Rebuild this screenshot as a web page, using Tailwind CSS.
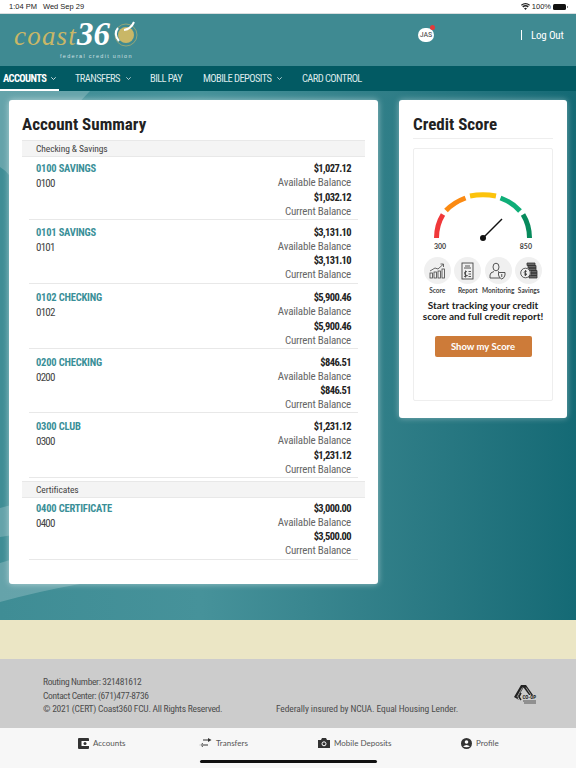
<!DOCTYPE html>
<html lang="en">
<head>
<meta charset="utf-8">
<title>Coast360 Account Summary</title>
<script src="https://cdn.jsdelivr.net/npm/@tailwindcss/browser@4"></script>
</head>
<body class="w-[576px] h-[768px] overflow-hidden bg-white font-['Roboto',sans-serif] [font-stretch:75%] text-[#333]">

<!-- status bar -->
<div class="h-[14px] bg-white border-b border-[#d9dedf] flex items-center justify-between pl-[9px] pr-[8px] text-[7.500px] text-[#222] font-['Liberation_Sans',sans-serif]">
  <div class="flex gap-[6px]"><span>1:04 PM</span><span>Wed Sep 29</span></div>
  <div class="flex items-center gap-[2px]">
    <svg class="w-[9px] h-[7px]" viewBox="0 0 18 14"><path d="M9 14 6 10.500Q9 8 12 10.500ZM4.500 8.800 2.500 6.500Q9 1 15.500 6.500L13.500 8.800Q9 5 4.500 8.800ZM1.500 5.300 0 3.500Q9-3.500 18 3.500L16.500 5.300Q9-.5 1.500 5.300Z" fill="#222"/></svg>
    <span>100%</span>
    <span class="w-[13px] h-[6px] rounded-[1.500px] bg-[#111]"></span>
    <span class="w-[1px] h-[2px] -ml-[1px] bg-[#888]"></span>
  </div>
</div>

<!-- header -->
<header class="h-[52px] bg-[#3f8a92] flex justify-between pl-[14px] pr-[14px]">
  <div class="relative w-[126px] pt-[5px]">
    <div class="flex items-baseline h-[30px] leading-[30px]">
      <span class="font-['Liberation_Serif',serif] italic text-[27px] tracking-[1.200px] text-[#c9b767]">coast</span>
      <span class="font-['Liberation_Serif',serif] italic font-bold text-[33px] text-white">36</span>
    </div>
    <svg class="absolute left-[97px] top-[7px] w-[30px] h-[26px]" viewBox="0 0 30 26">
      <circle cx="15" cy="14" r="11" fill="none" stroke="#c9b767" stroke-width=".6"/>
      <circle cx="15" cy="14" r="8" fill="#c9b767"/>
      <path d="M8 20Q2 13 7 7M13 9Q20 8 23 1" fill="none" stroke="#fff" stroke-width="2"/>
    </svg>
    <div class="absolute left-[46px] top-[38px] text-[5.500px] tracking-[1.300px] text-[#cfe0e2] font-['Liberation_Sans',sans-serif] whitespace-nowrap">federal credit union</div>
  </div>
  <div class="flex items-start pt-[13px]">
    <div class="relative w-[16px] h-[14px] mt-[1px] rounded-full bg-white text-[8px] leading-[14px] text-center text-[#444]">JAS
      <span class="absolute -top-[3px] right-[-1px] w-[5px] h-[5px] rounded-full bg-[#e23a3a]"></span>
    </div>
    <div class="ml-[87px] w-[1px] h-[10px] mt-[3px] bg-white"></div>
    <div class="ml-[9px] mt-[1px] w-[31px] text-[11px] tracking-[-.2px] leading-[16px] text-white whitespace-nowrap">Log Out</div>
  </div>
</header>

<!-- nav -->
<nav class="h-[25px] bg-[#025a63] flex text-[10.500px] leading-[25px] text-[#dce9ea] tracking-[-.6px]">
  <div class="relative w-[75px] pl-[3px] font-bold text-white flex items-center gap-[5px]">ACCOUNTS
    <svg class="w-[5px] h-[3px]" viewBox="0 0 5 3" fill="none" stroke="currentColor" stroke-width=".8"><path d="M.3.3 2.500 2.500 4.700.3"/></svg>
    <span class="absolute left-0 bottom-0 h-[2px] w-[59px] bg-white"></span>
  </div>
  <div class="w-[75px] flex items-center gap-[6px]">TRANSFERS
    <svg class="w-[5px] h-[3px]" viewBox="0 0 5 3" fill="none" stroke="currentColor" stroke-width=".8"><path d="M.3.3 2.500 2.500 4.700.3"/></svg>
  </div>
  <div class="w-[53px]">BILL PAY</div>
  <div class="w-[99px] flex items-center gap-[6px]">MOBILE DEPOSITS
    <svg class="w-[5px] h-[3px]" viewBox="0 0 5 3" fill="none" stroke="currentColor" stroke-width=".8"><path d="M.3.3 2.500 2.500 4.700.3"/></svg>
  </div>
  <div>CARD CONTROL</div>
</nav>

<!-- main area -->
<main class="relative h-[529px] bg-gradient-to-r from-[#3f8d95] via-[#46929a] via-35% to-[#146a75] overflow-hidden pt-[9px] pl-[9px] flex items-start gap-[21px]">
  <svg class="absolute inset-0 w-[576px] h-[529px]" viewBox="0 0 576 529">
    <path d="M0 76Q5 79 9 84L40 60Q60 30 90 0H0Z" fill="#ffffff" fill-opacity=".2"/>
    <path d="M0 417Q20 412 40 405V440Q20 443 0 446Z" fill="#ffffff" fill-opacity=".2"/>
    <path d="M0 472 40 460V493H80Q40 500 0 511Z" fill="#ffffff" fill-opacity=".2"/>
  </svg>

  <section class="relative w-[369px] h-[484px] shrink-0 bg-white rounded-[3px] shadow-[0_0_6px_rgba(255,255,255,.5)] pl-[13px] pr-[13px]">
    <h1 class="h-[38px] pt-[12px] text-[17px] leading-[25px] font-bold text-[#222]">Account Summary</h1>
    <h2 class="h-[17px] mt-[2px] pl-[14px] bg-[#f4f4f4] border-y border-[#e8e8e8] text-[9.500px] tracking-[-.1px] leading-[16px] text-[#444]">Checking &amp; Savings</h2>

    <div class="mx-[7px] h-[62.500px] border-b border-[#e8e8e8] px-[7px] pt-[5px] flex justify-between text-[11px] leading-[14.300px]">
      <div><div class="text-[10.500px] tracking-[-.2px] font-bold text-[#3a8f98]">0100 SAVINGS</div><div class="text-[#444] tracking-[-.8px] mt-[1px]">0100</div></div>
      <div class="text-right text-[#666] tracking-[-.2px]"><div class="text-[10.500px] tracking-[-.6px] font-bold text-[#222]">$1,027.12</div><div>Available Balance</div><div class="text-[10.500px] tracking-[-.6px] font-bold text-[#222]">$1,032.12</div><div>Current Balance</div></div>
    </div>
    <div class="mx-[7px] h-[64.500px] border-b border-[#e8e8e8] px-[7px] pt-[6px] flex justify-between text-[11px] leading-[14.300px]">
      <div><div class="text-[10.500px] tracking-[-.2px] font-bold text-[#3a8f98]">0101 SAVINGS</div><div class="text-[#444] tracking-[-.8px] mt-[1px]">0101</div></div>
      <div class="text-right text-[#666] tracking-[-.2px]"><div class="text-[10.500px] tracking-[-.6px] font-bold text-[#222]">$3,131.10</div><div>Available Balance</div><div class="text-[10.500px] tracking-[-.6px] font-bold text-[#222]">$3,131.10</div><div>Current Balance</div></div>
    </div>
    <div class="mx-[7px] h-[64.500px] border-b border-[#e8e8e8] px-[7px] pt-[7px] flex justify-between text-[11px] leading-[14.300px]">
      <div><div class="text-[10.500px] tracking-[-.2px] font-bold text-[#3a8f98]">0102 CHECKING</div><div class="text-[#444] tracking-[-.8px] mt-[1px]">0102</div></div>
      <div class="text-right text-[#666] tracking-[-.2px]"><div class="text-[10.500px] tracking-[-.6px] font-bold text-[#222]">$5,900.46</div><div>Available Balance</div><div class="text-[10.500px] tracking-[-.6px] font-bold text-[#222]">$5,900.46</div><div>Current Balance</div></div>
    </div>
    <div class="mx-[7px] h-[64.500px] border-b border-[#e8e8e8] px-[7px] pt-[7px] flex justify-between text-[11px] leading-[14.300px]">
      <div><div class="text-[10.500px] tracking-[-.2px] font-bold text-[#3a8f98]">0200 CHECKING</div><div class="text-[#444] tracking-[-.8px] mt-[1px]">0200</div></div>
      <div class="text-right text-[#666] tracking-[-.2px]"><div class="text-[10.500px] tracking-[-.6px] font-bold text-[#222]">$846.51</div><div>Available Balance</div><div class="text-[10.500px] tracking-[-.6px] font-bold text-[#222]">$846.51</div><div>Current Balance</div></div>
    </div>
    <div class="mx-[7px] h-[64.500px] border-b border-[#e8e8e8] px-[7px] pt-[7px] flex justify-between text-[11px] leading-[14.300px]">
      <div><div class="text-[10.500px] tracking-[-.2px] font-bold text-[#3a8f98]">0300 CLUB</div><div class="text-[#444] tracking-[-.8px] mt-[1px]">0300</div></div>
      <div class="text-right text-[#666] tracking-[-.2px]"><div class="text-[10.500px] tracking-[-.6px] font-bold text-[#222]">$1,231.12</div><div>Available Balance</div><div class="text-[10.500px] tracking-[-.6px] font-bold text-[#222]">$1,231.12</div><div>Current Balance</div></div>
    </div>

    <h2 class="h-[17px] mt-[3px] pl-[14px] bg-[#f4f4f4] border-y border-[#e8e8e8] text-[9.500px] tracking-[-.1px] leading-[15px] text-[#444]">Certificates</h2>
    <div class="mx-[7px] h-[62.500px] border-b border-[#e8e8e8] px-[7px] pt-[4px] flex justify-between text-[11px] leading-[14.300px]">
      <div><div class="text-[10.500px] tracking-[-.2px] font-bold text-[#3a8f98]">0400 CERTIFICATE</div><div class="text-[#444] tracking-[-.8px] mt-[1px]">0400</div></div>
      <div class="text-right text-[#666] tracking-[-.2px]"><div class="text-[10.500px] tracking-[-.6px] font-bold text-[#222]">$3,000.00</div><div>Available Balance</div><div class="text-[10.500px] tracking-[-.6px] font-bold text-[#222]">$3,500.00</div><div>Current Balance</div></div>
    </div>
  </section>

  <aside class="relative w-[168px] h-[318px] shrink-0 bg-white rounded-[3px] shadow-[0_0_6px_rgba(255,255,255,.4)] px-[14px]">
    <h1 class="h-[39px] pt-[12px] border-b border-[#eeeeee] text-[17px] leading-[25px] font-bold text-[#222]">Credit Score</h1>
    <div class="mt-[9px] h-[253px] border border-[#eeeeee] rounded-[2px] font-['Lato','Noto_Sans',sans-serif] [font-stretch:100%]">
      <svg class="block mx-auto mt-[42px] w-[100px] h-[54px]" viewBox="0 0 100 54">
        <g fill="none" stroke-width="5">
          <path d="M3.500 47Q3.500 34 10 23.500" stroke="#f0383a"/>
          <path d="M13 19.500Q20.500 11.500 32.500 7" stroke="#fb8a12"/>
          <path d="M37 5Q50 2.500 63 5" stroke="#fcc30c"/>
          <path d="M67.500 7Q79.500 11.500 87 20" stroke="#0fae78"/>
          <path d="M90 23.500Q96.500 34 96.500 47" stroke="#078a5c"/>
        </g>
        <path d="M50 47 69 28" stroke="#111" stroke-width="1.500"/>
        <circle cx="50" cy="47" r="3" fill="#111"/>
      </svg>
      <div class="flex justify-between w-[100px] mx-auto -mt-[3px] text-[7px] leading-[9px] font-bold text-[#444] px-[1px]"><span>300</span><span>850</span></div>
      <div class="flex justify-center gap-[3.500px] mt-[6px]">
        <div class="w-[27px] h-[27px] rounded-full bg-[#f0f0f0] flex items-center justify-center">
          <svg class="w-[16px] h-[16px]" viewBox="0 0 16 16" fill="none" stroke="#444" stroke-width=".8"><rect x="1" y="10" width="2.500" height="5"/><rect x="5" y="9" width="2.500" height="6"/><rect x="9" y="8" width="2.500" height="7"/><rect x="13" y="6" width="2.500" height="9"/><path d="M1 8 6 5 9 6 14 1.500M11.500 1H14.500V4"/></svg>
        </div>
        <div class="w-[27px] h-[27px] rounded-full bg-[#f0f0f0] flex items-center justify-center">
          <svg class="w-[13px] h-[18px]" viewBox="0 0 13 18" fill="none" stroke="#444" stroke-width=".9"><rect x="1" y="1" width="11" height="16"/><path d="M4 4H9M3 6H10M7.500 9.500H10M7.500 12H10M7.500 14.500H10M6 9.500Q3 9.500 3.500 11.500T6 13.500 3 14.500M4.500 8.500V15.500"/></svg>
        </div>
        <div class="w-[27px] h-[27px] rounded-full bg-[#f0f0f0] flex items-center justify-center">
          <svg class="w-[18px] h-[18px]" viewBox="0 0 18 18" fill="none" stroke="#444" stroke-width=".9"><ellipse cx="7" cy="5" rx="3" ry="3.800"/><path d="M1 16V13Q1 10.500 5 9.500M9 9.500 10 10M1 16H11"/><path d="M9.500 10.500H16V13Q15.500 16 12.750 17 10 16 9.500 13Z"/><path d="M12.750 12V15"/></svg>
        </div>
        <div class="w-[27px] h-[27px] rounded-full bg-[#f0f0f0] flex items-center justify-center">
          <svg class="w-[18px] h-[18px]" viewBox="0 0 18 18" fill="none" stroke="#333" stroke-width=".8"><path d="M7 1H15V3.500H7ZM8 3.500H16V6H8ZM9 6H16V8.500H9ZM11 8.500H17V11H11ZM11 11H17V13.500H11ZM9 13.500H17V16H9Z" fill="#666"/><circle cx="5.500" cy="11" r="4.800" fill="#f0f0f0"/><path d="M6.800 9.300Q4 8.800 4.200 10.500T6.800 12Q6.800 13.500 4.200 12.800M5.500 8V14"/></svg>
        </div>
      </div>
      <div class="flex justify-center gap-[3.500px] mt-[2px] text-[6.500px] leading-[9px] font-bold text-[#444] whitespace-nowrap">
        <span class="w-[27px] flex justify-center">Score</span><span class="w-[27px] flex justify-center">Report</span><span class="w-[27px] flex justify-center">Monitoring</span><span class="w-[27px] flex justify-center">Savings</span>
      </div>
      <p class="mt-[5px] text-center text-[10px] leading-[11px] font-bold text-[#222] whitespace-nowrap">Start tracking your credit<br>score and full credit report!</p>
      <div class="mx-auto mt-[14px] w-[97px] h-[21px] rounded-[2px] bg-[#cd7b39] text-center text-[9.500px] leading-[21px] font-bold text-white">Show my Score</div>
    </div>
  </aside>
</main>

<!-- cream strip -->
<div class="h-[39px] bg-[#ebe6c5]"></div>

<!-- footer -->
<footer class="h-[69px] bg-[#cccccc] flex pl-[43px] pt-[16px] text-[9.500px] leading-[13.500px] text-[#4d4d4d]">
  <div class="w-[233px]">
    <div class="tracking-[-.35px]">Routing Number: 321481612</div>
    <div class="tracking-[-.35px]">Contact Center: (671)477-8736</div>
    <div class="tracking-[-.25px]">© 2021 (CERT) Coast360 FCU. All Rights Reserved.</div>
  </div>
  <div class="pt-[27px] w-[237px] tracking-[-.1px] whitespace-nowrap">Federally insured by NCUA. Equal Housing Lender.</div>
  <svg class="w-[24px] h-[22px] mt-[9px]" viewBox="0 0 24 22">
    <path d="M1 13 8 1H13L20 11H16L10.500 3.500 4.500 14 6 16Z" fill="#222"/>
    <path d="M4 13 9.500 3.500M7 13 10.500 7M13 3.500 18 11" fill="none" stroke="#cccccc" stroke-width=".7"/>
    <path d="M8 9 6 13 8 16" fill="none" stroke="#222" stroke-width="1.500"/>
    <text x="9.500" y="15" font-size="5" font-weight="700" fill="#222">CO-OP</text>
    <path d="M10 16.500H23V17.500H10ZM11 18.500H23V19.500H11Z" fill="#555"/>
  </svg>
</footer>

<!-- bottom tabs -->
<div class="relative h-[40px] bg-[#f7f7f7] flex items-start text-[8px] leading-[30px] text-[#555] font-['Lato',sans-serif] [font-stretch:100%]">
  <div class="ml-[78px] w-[121px] h-[30px] flex items-center gap-[4px]">
    <svg class="w-[11px] h-[11px]" viewBox="0 0 11 11"><rect width="11" height="11" rx="1" fill="#333"/><path d="M3.500 3H11V8H3.500Z" fill="#fff"/><circle cx="7" cy="5.500" r="1.500" fill="#333"/></svg>Accounts
  </div>
  <div class="w-[119px] h-[30px] flex items-center gap-[4px]">
    <svg class="w-[13px] h-[10px]" viewBox="0 0 13 10" fill="#333"><path d="M4 1.500H12V2.500H4ZM9 0 12.500 2 9 4ZM1 6.500H9V7.500H1ZM4 5 .5 7 4 9Z"/></svg>Transfers
  </div>
  <div class="w-[143px] h-[30px] flex items-center gap-[4px]">
    <svg class="w-[12px] h-[10px]" viewBox="0 0 12 10"><path d="M0 2H3L4 0H8L9 2H12V10H0Z" fill="#333"/><circle cx="6" cy="5.800" r="2" fill="none" stroke="#fff"/></svg>Mobile Deposits
  </div>
  <div class="h-[30px] flex items-center gap-[4px]">
    <svg class="w-[11px] h-[11px]" viewBox="0 0 11 11"><circle cx="5.500" cy="5.500" r="5.500" fill="#333"/><circle cx="5.500" cy="4" r="1.800" fill="#fff"/><path d="M2 8.500Q5.500 5.500 9 8.500 5.500 10 2 8.500Z" fill="#fff"/></svg>Profile
  </div>
  <span class="absolute left-[200px] top-[32px] w-[177px] h-[3px] rounded-full bg-[#111]"></span>
</div>
</body>
</html>
